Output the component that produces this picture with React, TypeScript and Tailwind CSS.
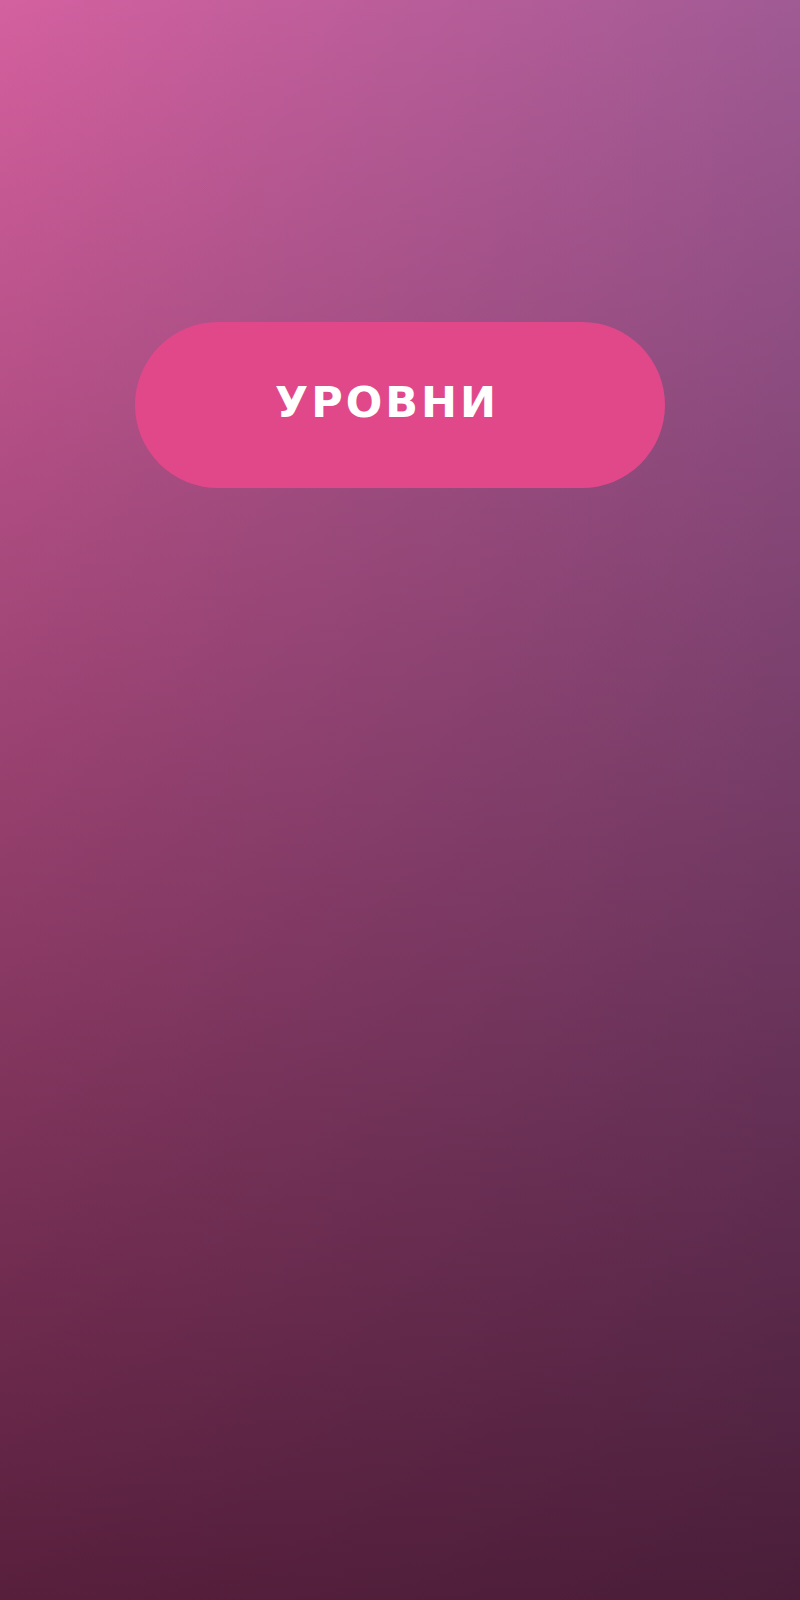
export default function App() {
  return (
    <div className="min-h-[1600px] w-full flex flex-col items-center pt-[322px] bg-[linear-gradient(to_bottom,rgba(40,6,22,0)_0%,rgba(40,6,22,0.72)_100%),linear-gradient(to_right,#d4609f,#a05a94)]">
      <button
        type="button"
        className="w-[530px] h-[166px] rounded-full bg-[#e0488a] flex items-center justify-center pb-[6px] pr-[26px]"
      >
        <span className="text-white text-[43px] font-bold uppercase leading-none tracking-[3px] font-['DejaVu_Sans',sans-serif]">
          Уровни
        </span>
      </button>
    </div>
  );
}
